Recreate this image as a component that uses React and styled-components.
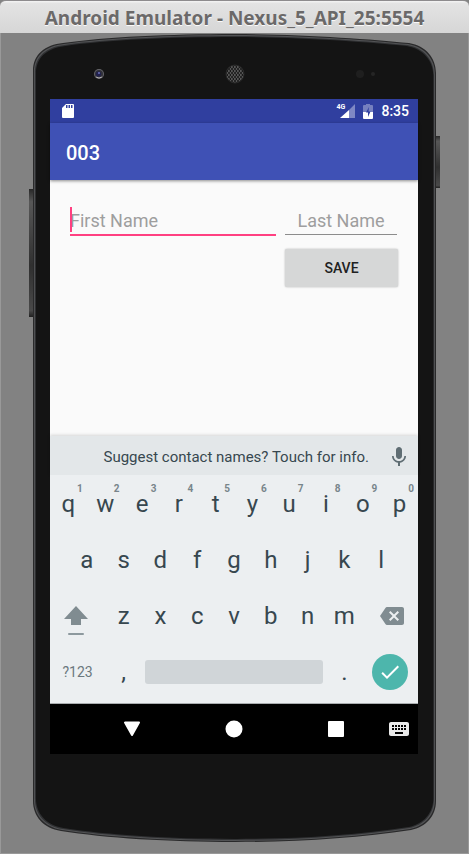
import React from "react";
import styled, { createGlobalStyle } from "styled-components";

const GlobalStyle = createGlobalStyle`
  * { box-sizing: border-box; }
  body { margin: 0; background: #828282; font-family: Roboto, sans-serif; }
  button, input { font-family: inherit; margin: 0; padding: 0; border: 0; background: none; }
  button { cursor: pointer; }
  svg { display: block; }
`;

const EmulatorWindow = styled.div`
  display: flex;
  flex-direction: column;
  min-height: 100vh;
  padding-bottom: 11px;
  background: #828282;
  border-radius: 6px 6px 0 0;
  box-shadow: inset 1px 0 #999, inset -1px -1px #999;
`;

const TitleBar = styled.header`
  display: flex;
  align-items: center;
  justify-content: center;
  height: 33px;
  padding-top: 1px;
  border-top: 1px solid #8d8b8d;
  border-radius: 6px 6px 0 0;
  background: linear-gradient(#f4f4f4, #e3e3e3 8%, #d6d6d6);
`;

const Title = styled.h1`
  margin: 0;
  font: 700 19px/24px "Noto Sans", "Open Sans", sans-serif;
  color: #6b6969;
  text-shadow: 0 1px #fafafa;
  white-space: nowrap;
`;

const Device = styled.main`
  position: relative;
  z-index: 0;
  flex: 1;
  display: flex;
  flex-direction: column;
  margin: 0 29px;
  padding: 0 22px 89px 21px;
`;

const Shell = styled.svg`
  position: absolute;
  inset: 0;
  width: 100%;
  height: 100%;
  z-index: -1;
`;

const Forehead = styled.div`
  display: grid;
  grid-template-columns: 1fr 20px 1fr;
  align-items: center;
  height: 66px;
  padding: 16px 42px 0 43px;
`;

const Sensors = styled.div`
  justify-self: end;
`;

const Screen = styled.div`
  flex: 1;
  display: flex;
  flex-direction: column;
  background: #fafafa;
`;

const StatusBar = styled.div`
  display: flex;
  align-items: center;
  height: 24px;
  padding: 0 9px 0 12px;
  background: #303f9f;
  color: #fff;
`;

const StatusIcons = styled.div`
  display: flex;
  align-items: center;
  gap: 8px;
  margin-left: auto;
`;

const Signal = styled.div`
  position: relative;
  width: 19px;
  padding-left: 4px;
`;

const NetworkType = styled.span`
  position: absolute;
  left: 0;
  top: -1px;
  font-size: 7px;
  line-height: 8px;
  font-weight: 700;
`;

const Clock = styled.time`
  padding-top: 1px;
  font-size: 14px;
  line-height: 23px;
  font-weight: 500;
`;

const AppBar = styled.div`
  display: flex;
  align-items: center;
  height: 57px;
  padding: 2px 16px 0;
  background: #3f51b5;
  box-shadow: 0 1px 3px rgba(0, 0, 0, 0.45);
  color: #fff;
`;

const AppTitle = styled.h2`
  margin: 0;
  font-size: 20px;
  line-height: 28px;
  font-weight: 500;
`;

const Form = styled.form`
  flex: 1;
  display: grid;
  grid-template-columns: 1fr 114px;
  grid-template-rows: 30px 38px;
  gap: 13px 8px;
  align-items: start;
  padding: 26px 20px;
`;

const Field = styled.label`
  position: relative;
  display: flex;
  margin: ${(p) => (p.$active ? "0" : "0 1px")};
`;

const TextInput = styled.input`
  width: 100%;
  height: ${(p) => (p.$active ? "30px" : "29px")};
  border-bottom: ${(p) => (p.$active ? "2px solid #ff4081" : "1px solid #8c8c8c")};
  font-size: 18px;
  color: #212121;
  caret-color: #ff4081;
  text-align: ${(p) => (p.$centered ? "center" : "left")};
  outline: 0;
  &::placeholder { color: #9e9e9e; opacity: 1; }
`;

const Caret = styled.span`
  position: absolute;
  left: 0;
  top: 1px;
  width: 2px;
  height: 25px;
  background: #ff4081;
`;

const SaveButton = styled.button`
  grid-column: 2;
  height: 38px;
  margin-left: 1px;
  border-radius: 2px;
  background: #d6d7d7;
  box-shadow: 0 0 2px rgba(0, 0, 0, 0.3);
  font-size: 14px;
  font-weight: 500;
  color: #212121;
`;

const Suggestion = styled.div`
  display: flex;
  align-items: center;
  justify-content: flex-end;
  gap: 18px;
  height: 40px;
  padding: 3px 7px 0;
  border-bottom: 1px solid #eceff1;
  background: #e3e7e9;
  box-shadow: 0 -1px 3px rgba(0, 0, 0, 0.15);
  color: #37474f;
`;

const SuggestionText = styled.span`
  font-size: 15px;
  line-height: 20px;
  white-space: nowrap;
`;

const PlainButton = styled.button`
  display: grid;
  place-items: center;
`;

const Keyboard = styled.div`
  padding-bottom: 3px;
  border-bottom: 1px solid #a9adaf;
  background: #eceff1;
`;

const KeyRow = styled.div`
  display: grid;
  grid-template-columns: repeat(${(p) => (p.$inset ? 18 : 20)}, 1fr);
  height: 56px;
  padding: 0 ${(p) => (p.$inset ? "5%" : "0")};
`;

const Key = styled.button`
  position: relative;
  display: grid;
  place-items: center;
  grid-column: span ${(p) => p.$span || 2};
  min-width: 0;
  font-size: ${(p) => (p.$small ? "14px" : "24px")};
  line-height: 28px;
  color: ${(p) => (p.$small ? "#6b787e" : "#37474f")};
`;

const Hint = styled.span`
  position: absolute;
  right: 4px;
  top: 7px;
  font-size: 10px;
  line-height: 12px;
  font-weight: 700;
  color: #78858b;
`;

const SpaceBar = styled.span`
  width: calc(100% - 6px);
  height: 24px;
  border-radius: 3px;
  background: #d0d5d8;
`;

const EnterDisc = styled.span`
  display: grid;
  place-items: center;
  width: 36px;
  height: 36px;
  border-radius: 50%;
  background: #4db6ac;
`;

const NavBar = styled.nav`
  display: grid;
  grid-template-columns: 1fr 102px 102px 102px 1fr;
  align-items: center;
  height: 50px;
  background: #000;
`;

const NavButton = styled(PlainButton)`
  height: 48px;
  justify-items: ${(p) => (p.$start ? "start" : "center")};
`;

const numberRow = [
  ["q", "1"], ["w", "2"], ["e", "3"], ["r", "4"], ["t", "5"],
  ["y", "6"], ["u", "7"], ["i", "8"], ["o", "9"], ["p", "0"],
];

function DeviceShell() {
  const outline =
    "M4 38C4 21 16 12 34 10C76 4 140 1 206 1C272 1 340 6 380 10C397 13 407 25 407 40V768C407 783 397 794 382 797C330 805 270 809 206 809C140 809 76 805 32 798C14 795 4 783 4 768Z";
  return (
    <Shell viewBox="0 0 411 810" preserveAspectRatio="none" aria-hidden="true">
      <defs>
        <linearGradient id="button" x1="0" x2="0" y1="0" y2="1">
          <stop offset="0" stopColor="#282828" />
          <stop offset="0.1" stopColor="#575757" />
          <stop offset="0.6" stopColor="#303030" />
          <stop offset="0.95" stopColor="#494949" />
          <stop offset="1" stopColor="#202020" />
        </linearGradient>
      </defs>
      <rect x="0" y="156" width="5" height="128" fill="url(#button)" />
      <rect x="406" y="103" width="5" height="52" fill="url(#button)" />
      <path d={outline} fill="#29292a" />
      <path d={outline} fill="#515254" transform="translate(1 1) scale(.995 .9975)" />
      <path d={outline} fill="#303133" transform="translate(2 2) scale(.99 .995)" />
      <path d={outline} fill="#141414" transform="translate(3 3) scale(.986 .9925)" />
    </Shell>
  );
}

function Camera() {
  return (
    <svg width="12" height="12" viewBox="0 0 12 12" aria-hidden="true">
      <circle cx="6" cy="6" r="5" fill="#66666a" />
      <circle cx="6" cy="6" r="4" fill="#303039" />
      <circle cx="5.5" cy="6" r="2.5" fill="#20204f" />
      <circle cx="6" cy="5" r="1" fill="#6b70b7" />
      <path d="M3 9q3 2 6 0" stroke="#b1aeb0" fill="none" />
    </svg>
  );
}

function Speaker() {
  return (
    <svg width="20" height="20" viewBox="0 0 20 20" aria-hidden="true">
      <defs>
        <pattern id="mesh" width="3" height="4" patternUnits="userSpaceOnUse">
          <rect width="3" height="4" fill="#565656" />
          <circle cx="1" cy="1" r="1" fill="#161616" />
          <circle cx="2.5" cy="3" r="1" fill="#161616" />
        </pattern>
      </defs>
      <circle cx="10" cy="10" r="9" fill="url(#mesh)" stroke="#292929" />
    </svg>
  );
}

function SdCard() {
  return (
    <svg width="12" height="14" viewBox="0 0 12 14" aria-hidden="true">
      <path d="M4 0h7q1 0 1 1v12q0 1-1 1H1q-1 0-1-1V4Z" fill="#fff" />
      <path d="M4 1h1.5v3H4zM6.5 1H8v3H6.5zM9 1h1.5v3H9z" fill="#303f9f" />
    </svg>
  );
}

function Battery() {
  return (
    <svg width="10" height="15" viewBox="0 0 10 15" aria-hidden="true">
      <path d="M3 0h4v1h2q1 0 1 1v6H0V2q0-1 1-1h2Z" fill="#7680bf" />
      <path d="M0 8h10v6q0 1-1 1H1q-1 0-1-1Z" fill="#fff" />
      <path d="M6 3 3 8.500H5V13L7.500 7.500H5.500Z" fill="#303f9f" />
    </svg>
  );
}

function MaterialIcon({ size = 24, color, d }) {
  return (
    <svg width={size} height={size} viewBox="0 0 24 24" fill={color} aria-hidden="true">
      <path d={d} />
    </svg>
  );
}

const MIC = "M12 14c1.66 0 2.99-1.34 2.99-3L15 5c0-1.66-1.34-3-3-3S9 3.34 9 5v6c0 1.66 1.34 3 3 3zm5.3-3c0 3-2.54 5.1-5.3 5.1S6.7 14 6.7 11H5c0 3.41 2.72 6.23 6 6.72V21h2v-3.28c3.28-.48 6-3.3 6-6.72h-1.7z";
const BACKSPACE = "M22 3H7c-.69 0-1.23.35-1.59.88L0 12l5.41 8.11c.36.53.9.89 1.59.89h15c1.1 0 2-.9 2-2V5c0-1.1-.9-2-2-2zm-3 12.59L17.59 17 14 13.41 10.41 17 9 15.59 12.59 12 9 8.41 10.41 7 14 10.59 17.59 7 19 8.41 15.41 12 19 15.59z";
const KEYBOARD = "M20 5H4c-1.1 0-1.99.9-1.99 2L2 17c0 1.1.9 2 2 2h16c1.1 0 2-.9 2-2V7c0-1.1-.9-2-2-2zm-9 3h2v2h-2V8zm0 3h2v2h-2v-2zM8 8h2v2H8V8zm0 3h2v2H8v-2zm-1 2H5v-2h2v2zm0-3H5V8h2v2zm9 7H8v-2h8v2zm0-4h-2v-2h2v2zm0-3h-2V8h2v2zm3 3h-2v-2h2v2zm0-3h-2V8h2v2z";
const CHECK = "M9 16.17 4.83 12l-1.42 1.41L9 19 21 7l-1.41-1.41z";

export default function App() {
  return (
    <EmulatorWindow>
      <GlobalStyle />
      <TitleBar>
        <Title>Android Emulator - Nexus_5_API_25:5554</Title>
      </TitleBar>
      <Device>
        <DeviceShell />
        <Forehead>
          <Camera />
          <Speaker />
          <Sensors>
            <svg width="20" height="8" viewBox="0 0 20 8" aria-hidden="true">
              <circle cx="4" cy="4" r="4" fill="#1f1f1f" />
              <circle cx="17" cy="4" r="2" fill="#252525" />
            </svg>
          </Sensors>
        </Forehead>
        <Screen>
          <StatusBar>
            <SdCard />
            <StatusIcons>
              <Signal>
                <svg width="15" height="14" viewBox="0 0 15 14" aria-hidden="true">
                  <path d="M15 0v14H9V6Z" fill="#7f88c4" />
                  <path d="M9 6v8H0Z" fill="#fff" />
                </svg>
                <NetworkType>4G</NetworkType>
              </Signal>
              <Battery />
              <Clock>8:35</Clock>
            </StatusIcons>
          </StatusBar>
          <AppBar>
            <AppTitle>003</AppTitle>
          </AppBar>
          <Form onSubmit={(e) => e.preventDefault()}>
            <Field $active>
              <TextInput $active aria-label="First Name" placeholder="First Name" />
              <Caret />
            </Field>
            <Field>
              <TextInput $centered aria-label="Last Name" placeholder="Last Name" />
            </Field>
            <SaveButton type="submit">SAVE</SaveButton>
          </Form>
          <Suggestion>
            <SuggestionText>Suggest contact names? Touch for info.</SuggestionText>
            <PlainButton aria-label="Voice input">
              <MaterialIcon color="#5f6d73" d={MIC} />
            </PlainButton>
          </Suggestion>
          <Keyboard>
            <KeyRow>
              {numberRow.map(([letter, digit]) => (
                <Key key={letter}>
                  {letter}
                  <Hint>{digit}</Hint>
                </Key>
              ))}
            </KeyRow>
            <KeyRow $inset>
              {[..."asdfghjkl"].map((letter) => (
                <Key key={letter}>{letter}</Key>
              ))}
            </KeyRow>
            <KeyRow>
              <Key $span={3} aria-label="Shift">
                <svg width="30" height="40" viewBox="0 0 30 40" aria-hidden="true">
                  <path d="M13 10 25 23H18v6H8v-6H1Z" fill="#808c91" />
                  <rect x="5" y="37" width="16" height="2" rx="1" fill="#8d999e" />
                </svg>
              </Key>
              {[..."zxcvbnm"].map((letter) => (
                <Key key={letter}>{letter}</Key>
              ))}
              <Key $span={3} aria-label="Delete">
                <svg width="28" height="24" viewBox="-4 0 28 24" fill="#808c91" aria-hidden="true">
                  <path d={BACKSPACE} />
                </svg>
              </Key>
            </KeyRow>
            <KeyRow>
              <Key $span={3} $small>?123</Key>
              <Key>,</Key>
              <Key $span={10} aria-label="Space">
                <SpaceBar />
              </Key>
              <Key>.</Key>
              <Key $span={3} aria-label="Done">
                <EnterDisc>
                  <MaterialIcon color="#fff" d={CHECK} />
                </EnterDisc>
              </Key>
            </KeyRow>
          </Keyboard>
          <NavBar>
            <span />
            <NavButton aria-label="Back">
              <svg width="18" height="16" viewBox="0 0 18 16" aria-hidden="true">
                <path d="M2 1.5h14L9 14Z" fill="#fff" stroke="#fff" strokeWidth="2" strokeLinejoin="round" />
              </svg>
            </NavButton>
            <NavButton aria-label="Home">
              <svg width="18" height="18" viewBox="0 0 18 18" aria-hidden="true">
                <circle cx="9" cy="9" r="8.500" fill="#fff" />
              </svg>
            </NavButton>
            <NavButton aria-label="Overview">
              <svg width="16" height="16" viewBox="0 0 16 16" aria-hidden="true">
                <rect width="16" height="16" rx="1" fill="#fff" />
              </svg>
            </NavButton>
            <NavButton $start aria-label="Switch keyboard">
              <MaterialIcon color="#e9e9e9" d={KEYBOARD} />
            </NavButton>
          </NavBar>
        </Screen>
      </Device>
    </EmulatorWindow>
  );
}
